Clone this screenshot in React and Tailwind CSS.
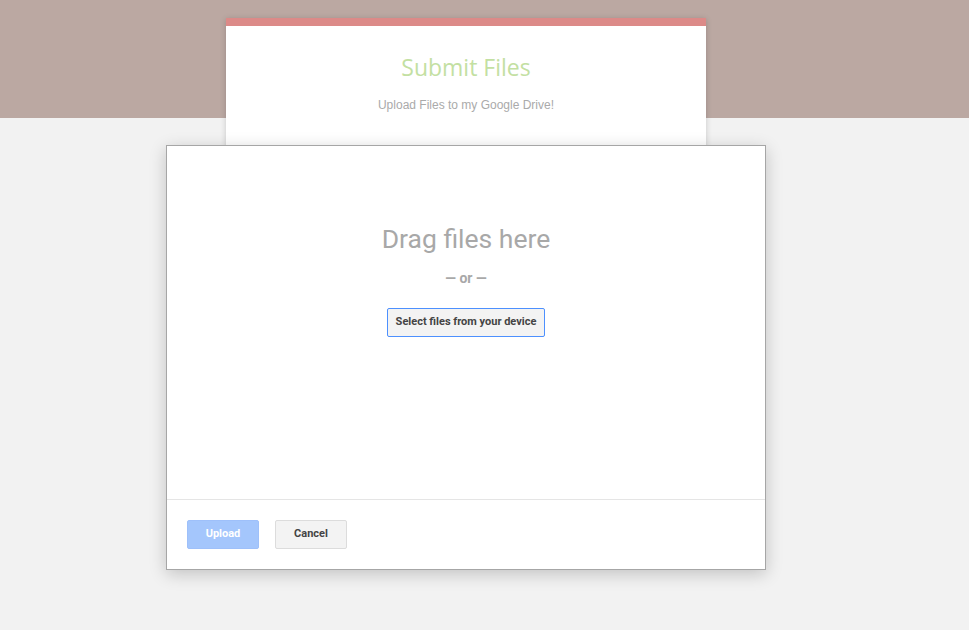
export default function App() {
  return (
    <div className="relative min-h-[630px] bg-[#f2f2f2] overflow-hidden" style={{ fontFamily: 'Roboto, Arial, sans-serif' }}>
      <div className="h-[118px] bg-[#bba8a2]" />
      <div className="ml-[226px] -mt-[100px] w-[480px] h-[220px] bg-white shadow-[0_1px_6px_rgba(0,0,0,0.18)]">
        <div className="h-[8px] bg-[#dc8a88]" />
        <h1 className="pt-[24px] text-center text-[23px] leading-[34px] text-[#c3e0a2]" style={{ fontFamily: '"Open Sans", "Noto Sans", sans-serif' }}>
          Submit Files
        </h1>
        <p className="mt-[12px] text-center text-[12px] text-[#aaaaaa]" style={{ fontFamily: '"Liberation Sans", Arial, sans-serif' }}>
          Upload Files to my Google Drive!
        </p>
      </div>

      <div className="absolute left-[166px] top-[145px] w-[600px] h-[425px] flex flex-col bg-white border border-[#a6a6a6] shadow-[0_4px_16px_rgba(0,0,0,0.2)]">
        <div className="flex-1 flex flex-col items-center pt-[76px]">
          <div className="text-[26.5px] leading-[34px] text-[#a8a8a8]">Drag files here</div>
          <div className="mt-[12px] text-[14px] font-bold text-[#a8a8a8]">— or —</div>
          <button className="mt-[19px] h-[29px] px-[8px] rounded-[2px] border border-[#4d90fe] bg-[#f3f3f3] text-[11px] font-bold text-[#444]">
            Select files from your device
          </button>
        </div>
        <div className="h-[70px] border-t border-[#e5e5e5] flex items-start gap-[16px] pl-[20px] pt-[20px]">
          <button className="w-[72px] h-[29px] rounded-[2px] bg-[#a4c6fc] border border-[#9ec0fa] text-[11px] font-bold text-white">
            Upload
          </button>
          <button className="w-[72px] h-[29px] rounded-[2px] bg-[#f3f3f3] border border-[#dcdcdc] text-[11px] font-bold text-[#444]">
            Cancel
          </button>
        </div>
      </div>
    </div>
  )
}
